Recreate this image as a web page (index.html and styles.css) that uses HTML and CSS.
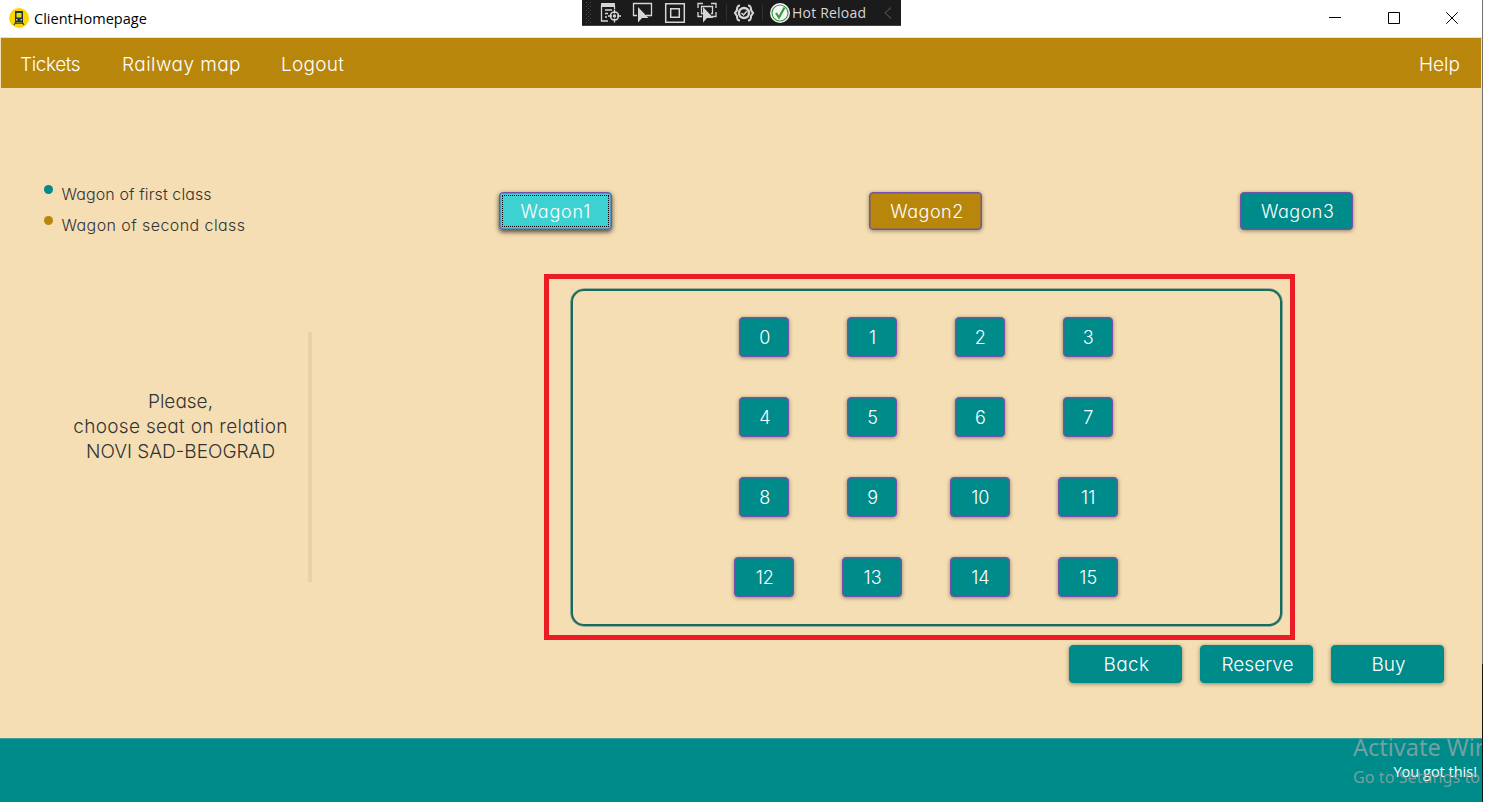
FILE: index.html
```html
<!DOCTYPE html>
<html lang="en">
<head>
<meta charset="utf-8">
<title>ClientHomepage</title>
<link rel="stylesheet" href="styles.css">
</head>
<body>
<div class="window">
  <header class="titlebar">
    <svg class="app-icon" width="20" height="20" viewBox="0 0 20 20"><circle cx="10" cy="10" r="10" fill="#ffd500"/><path d="M6 3h8v11H6z" fill="#12344f"/><path d="M7.500 5h5v4.500h-5z" fill="#ffd500"/><path d="M7 11h1.500v1.500H7zM11.500 11H13v1.500h-1.500z" fill="#ffd500"/><path d="M7 14l-2 3M13 14l2 3M6.500 15.200h7" stroke="#12344f" stroke-width="1.200"/></svg>
    <span class="app-title">ClientHomepage</span>
    <div class="controls">
      <svg width="12" height="12" viewBox="0 0 12 12"><path d="M0 5.500h12" stroke="#000"/></svg>
      <svg width="12" height="12" viewBox="0 0 12 12"><path d="M.5.500h11v11H.5z" stroke="#000" fill="none"/></svg>
      <svg width="12" height="12" viewBox="0 0 12 12"><path d="M.3.300l11.400 11.400M11.700.300L.3 11.700" stroke="#000"/></svg>
    </div>
  </header>

  <nav class="menu">
    <a class="item tickets">Tickets</a>
    <a class="item railway">Railway map</a>
    <a class="item logout">Logout</a>
    <a class="item help">Help</a>
  </nav>

  <main class="content">
    <aside class="side">
      <ul class="legend">
        <li class="legend-row"><i class="dot first"></i><span class="first-label">Wagon of first class</span></li>
        <li class="legend-row"><i class="dot second"></i><span class="second-label">Wagon of second class</span></li>
      </ul>
      <div class="message">
        <p class="message-text">Please,<br><span class="relation">choose seat on relation</span><br>NOVI SAD-BEOGRAD</p>
      </div>
    </aside>
    <section class="booking">
      <div class="wagons">
        <button class="btn wagon selected">Wagon1</button>
        <button class="btn wagon economy">Wagon2</button>
        <button class="btn wagon">Wagon3</button>
      </div>
      <div class="panel">
        <div class="seats">
          <button class="btn seat">0</button><button class="btn seat">1</button><button class="btn seat">2</button><button class="btn seat">3</button>
          <button class="btn seat">4</button><button class="btn seat">5</button><button class="btn seat">6</button><button class="btn seat">7</button>
          <button class="btn seat">8</button><button class="btn seat">9</button><button class="btn seat wide">10</button><button class="btn seat wide">11</button>
          <button class="btn seat wide">12</button><button class="btn seat wide">13</button><button class="btn seat wide">14</button><button class="btn seat wide">15</button>
        </div>
      </div>
      <div class="actions">
        <button class="btn action back">Back</button>
        <button class="btn action reserve">Reserve</button>
        <button class="btn action buy">Buy</button>
      </div>
    </section>
  </main>

  <footer class="footer"><span class="status">You got this!</span></footer>

  <div class="highlight"></div>
  <div class="watermark"><div class="wm-title">Activate Windows</div><div class="wm-sub">Go to Settings to activate Windows.</div></div>

  <div class="debugbar">
    <svg width="319" height="26" viewBox="0 0 319 26" fill="none">
      <g fill="#4a4a4c"><path d="M4 2h1v1H4zM8 2h1v1H8zM6 4h1v1H6zM4 6h1v1H4zM8 6h1v1H8zM6 8h1v1H6zM4 10h1v1H4zM8 10h1v1H8zM6 12h1v1H6zM4 14h1v1H4zM8 14h1v1H8zM6 16h1v1H6zM4 18h1v1H4zM8 18h1v1H8zM6 20h1v1H6zM4 22h1v1H4zM8 22h1v1H8z"/></g>
      <g stroke="#d6d6d6" stroke-width="1.300">
        <path d="M19 3h14v4H19z" fill="#d6d6d6" stroke="none"/><path d="M19.500 6v15H26M32.500 6v3M23 10h7M23 13.500h3M23 17h2"/>
        <circle cx="32.500" cy="16" r="4" stroke-width="1.600"/><path d="M32.500 9.500v4M32.500 18.500v4M26 16h4M35 16h4"/><circle cx="32.500" cy="16" r="1" fill="#d6d6d6"/>
        <path d="M55 15.500h-3.500v-12h18v12H64"/><path d="M56 7v15.500l4-4.500h6.500z" fill="#d6d6d6" stroke="none"/>
        <path d="M83.700 3.700h18.600v18.600H83.700zM88.700 8.700h8.600v8.600h-8.600z" stroke-width="1.500"/>
        <path d="M116 8V3.500h5M129 3.500h5V8M116 12v4.500h4M134 12v4.500h-4M121 13.500h-1.500v-7h11v7H129"/><path d="M121 7v15.500l4-4.500h6.500z" fill="#d6d6d6" stroke="none"/>
        <path d="M158 5.500c-3 0-3 2-3 4.500l-2 3 2 3c0 2.500 0 4.500 3 4.500M166 5.500c3 0 3 2 3 4.500l2 3-2 3c0 2.500 0 4.500-3 4.500" stroke-width="2.200"/>
        <circle cx="162" cy="13" r="5" stroke-width="2.400"/><path d="M159.500 13l2 2 3.500-4" stroke-width="1.500"/>
      </g>
      <path d="M144.500 4v17M180.500 4v17" stroke="#303032"/>
      <circle cx="198" cy="13" r="10" fill="#f5f5f5"/><circle cx="198" cy="13" r="8" stroke="#369b40" stroke-width="1.200"/><path d="M194 13l3 4.500 5.500-10" stroke="#369b40" stroke-width="2.200"/>
      <path d="M309 7.500l-6 5.500 6 5.500" stroke="#48484a" stroke-width="1.200"/>
    </svg>
    <span class="hot">Hot Reload</span>
  </div>
</div>
<div class="edge"></div>
</body>
</html>
```
FILE: styles.css
```css
* { box-sizing: border-box; }
body { margin: 0; width: 1485px; height: 807px; overflow: hidden; background: #fff; display: flex; font-family: "Century Gothic", Inter, sans-serif; font-weight: 300; font-feature-settings: "cv11"; }
.window { position: relative; width: 1482px; height: 802px; overflow: hidden; display: flex; flex-direction: column; background: #f5deb3; flex: none; }
.edge { width: 1px; height: 802px; background: linear-gradient(#727272 0 664px, #161616 664px); }

.titlebar { height: 37px; background: #fff; display: flex; align-items: center; padding: 0 24px 1px 9px; flex: none; }
.app-icon { margin-bottom: 1px; }
.app-title { font: 400 14.5px "Segoe UI", "Open Sans", sans-serif; letter-spacing: 0.02px; margin-left: 5px; color: #000; }
.controls { margin-left: auto; display: flex; gap: 46.500px; }
.controls svg { display: block; }

.menu { height: 50px; margin: 1px 1px 0; background: #b8860b; display: flex; align-items: center; color: #fff; font-size: 19px; padding: 2px 21px 0 19px; flex: none; }
.tickets { width: 102px; letter-spacing: -0.4px; }
.railway { width: 159px; letter-spacing: 0.45px; }
.logout { letter-spacing: 0.25px; }
.help { margin-left: auto; }

.content { height: 650px; flex: none; display: grid; grid-template-columns: 370px 1fr; }
.side { padding-top: 91px; }
.legend { list-style: none; margin: 0; padding: 0 0 0 43.500px; font-size: 16px; color: #333; }
.legend-row { height: 31px; display: flex; align-items: flex-start; line-height: 31px; white-space: nowrap; }
.dot { width: 9px; height: 9px; border-radius: 50%; margin: 6px 9px 0 0; }
.first { background: #008b8b; }
.second { background: #b8860b; }
.first-label { letter-spacing: 0.1px; }
.second-label { letter-spacing: 0.42px; }
.message { width: 312px; height: 250px; margin-top: 91px; padding: 57px 0 0 53px; border-right: 4px solid #e7d1a8; }
.message-text { margin: 0; font-size: 19px; line-height: 25px; text-align: center; color: #333; white-space: nowrap; }
.relation { letter-spacing: 0.3px; }

.booking { display: flex; flex-direction: column; padding-top: 104px; }
.btn { border: 1px solid #7551ad; border-radius: 4px; background: #008b8b; color: #fff; font: inherit; font-feature-settings: inherit; font-size: 18px; padding: 2px 0 0; box-shadow: inset 0 0 0 .7px rgba(108,80,168,.6), 0 1px 4px rgba(0,0,0,.42); display: flex; align-items: center; justify-content: center; }
.wagons { display: grid; grid-template-columns: repeat(3, 1fr); justify-items: center; }
.wagon { width: 113px; height: 38px; padding: 0 0 0 2px; letter-spacing: 0.5px; }
.economy { background: #b8860b; }
.selected { background: #3dd1d1; padding-left: 1px; letter-spacing: 0.85px; outline: 1px dotted #000; outline-offset: -4px; box-shadow: inset 0 0 0 .7px rgba(108,80,168,.6), 0 2px 5px rgba(0,0,0,.7); }
.panel { width: 711px; height: 337px; margin: 59px auto 0; border: 2px solid #176b61; border-radius: 13px; box-shadow: 0 0 0 .6px #3f8275; display: flex; justify-content: center; align-items: center; }
.seats { display: grid; grid-template-columns: repeat(4, 107.800px); grid-template-rows: repeat(4, 80.300px); place-items: center; margin: -1px 0 0; }
.seat { width: 50px; height: 40px; padding: 1px 0 0 1px; }
.wide { width: 60px; }
.actions { display: flex; justify-content: flex-end; gap: 18px; padding-right: 38px; margin-top: 19px; }
.action { width: 113px; height: 38px; padding: 0 0 0 2px; border-color: #008b8b; font-size: 19px; box-shadow: 0 1px 4px rgba(0,0,0,.42); }
.back { letter-spacing: 0.4px; }

.footer { height: 64px; background: #008b8b; border-top: 1px solid #3b9d94; display: flex; justify-content: flex-end; align-items: center; padding: 2px 5px 0 0; }
.status { font: 400 14.500px "Segoe UI", "Open Sans", sans-serif; color: #fff; }

.highlight { position: absolute; left: 544px; top: 274px; width: 751px; height: 366px; border: 5px solid #ed1c24; }
.watermark { position: absolute; left: 1353px; top: 731px; color: rgba(170,170,170,.7); font-family: "Segoe UI", "Noto Sans", sans-serif; font-weight: 400; white-space: nowrap; }
.wm-title { font-size: 23.500px; line-height: 33px; }
.wm-sub { font-size: 16.200px; line-height: 26px; }
.debugbar { position: absolute; left: 582px; top: 0; width: 319px; height: 26px; background: #1b1b1c; border-bottom: 1px solid #424245; }
.debugbar svg { display: block; }
.hot { position: absolute; left: 210px; top: 3px; font: 400 14px/20px "Segoe UI", "Open Sans", sans-serif; letter-spacing: 0.2px; color: #d6d6d6; white-space: nowrap; }
```
